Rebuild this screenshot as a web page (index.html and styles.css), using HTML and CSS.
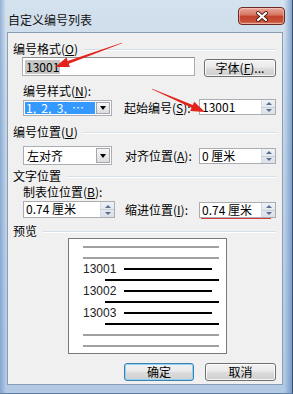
FILE: index.html
```html
<!DOCTYPE html>
<html lang="zh-CN">
<head>
<meta charset="utf-8"/>
<title>自定义编号列表</title>
<link rel="stylesheet" href="styles.css">
</head>
<body>
<div class="window">
  <div class="titlebar">
    <span class="title">自定义编号列表</span>
    <button class="close" aria-label="关闭">
      <svg width="14" height="11" viewBox="0 0 14 11">
        <path d="M3 2 L11 9 M11 2 L3 9" stroke="#4a1e16" stroke-width="4" stroke-linecap="round"/>
        <path d="M3 2 L11 9 M11 2 L3 9" stroke="#fff" stroke-width="2.2" stroke-linecap="round"/>
      </svg>
    </button>
  </div>

  <div class="client">
    <div class="sect">编号格式(<u>O</u>)</div>
    <div class="row row-format">
      <div class="field fmt"><span class="sel">13001</span></div>
      <button class="btn font-btn">字体(<u>F</u>)...</button>
    </div>

    <div class="sub">编号样式(<u>N</u>):</div>
    <div class="row row-style">
      <div class="combo combo-style"><span class="hl">1,  2,  3,  …</span><span class="drop"></span></div>
      <span class="lbl">起始编号(<u>S</u>):</span>
      <div class="spin"><span class="val">13001</span><span class="spin-btn"><i class="up"></i><i class="down"></i></span></div>
    </div>

    <div class="sect">编号位置(<u>U</u>)</div>
    <div class="row row-align">
      <div class="combo combo-align"><span class="txt">左对齐</span><span class="drop"></span></div>
      <span class="lbl">对齐位置(<u>A</u>):</span>
      <div class="spin"><span class="val">0 厘米</span><span class="spin-btn"><i class="up"></i><i class="down"></i></span></div>
    </div>

    <div class="sect sect-text">文字位置</div>
    <div class="sub sub-tab">制表位位置(<u>B</u>):</div>
    <div class="row row-indent">
      <div class="spin spin-tab"><span class="val">0.74 厘米</span><span class="spin-btn"><i class="up"></i><i class="down"></i></span></div>
      <span class="lbl">缩进位置(<u>I</u>):</span>
      <div class="spin spin-indent"><span class="val">0.74 厘米</span><span class="spin-btn"><i class="up"></i><i class="down"></i></span></div>
    </div>

    <div class="sect sect-preview">预览</div>
    <div class="preview">
      <svg width="157" height="114" viewBox="0 0 157 114">
        <g stroke="#a0a0a0" stroke-width="2">
          <line x1="14" y1="8" x2="150" y2="8"/>
          <line x1="14" y1="19" x2="150" y2="19"/>
          <line x1="14" y1="96" x2="150" y2="96"/>
          <line x1="14" y1="107" x2="150" y2="107"/>
        </g>
        <g stroke="#000" stroke-width="2">
          <line x1="55" y1="30" x2="143" y2="30"/>
          <line x1="36" y1="41" x2="150" y2="41"/>
          <line x1="55" y1="52" x2="143" y2="52"/>
          <line x1="36" y1="63" x2="150" y2="63"/>
          <line x1="55" y1="74" x2="143" y2="74"/>
          <line x1="36" y1="85" x2="150" y2="85"/>
        </g>
        <g class="pv-num">
          <text x="14" y="34">13001</text>
          <text x="14" y="56">13002</text>
          <text x="14" y="78">13003</text>
        </g>
      </svg>
    </div>

    <div class="actions">
      <button class="btn btn-default">确定</button>
      <button class="btn">取消</button>
    </div>
  </div>

  <!-- annotations drawn over the dialog -->
  <svg class="marks" width="293" height="394" viewBox="0 0 293 394">
    <polygon fill="#e3221c" points="122.1,43.3 68.7,63.7 69.9,67 55,67 66.5,57.6 67.7,60.9 121.9,42.7"/>
    <polygon fill="#e3221c" points="151.9,89.3 191.6,107.8 190.2,111 205,112 194.2,101.8 192.8,105 152.1,88.7"/>
    <line x1="201" y1="218.5" x2="271" y2="218.5" stroke="#d83a3a" stroke-width="1"/>
  </svg>
</div>
</body>
</html>
```

FILE: styles.css
```css
html, body {
  margin: 0;
  background: #fff;
}
body {
  font-family: "Noto Sans CJK SC", sans-serif;
  font-size: 12px;
  color: #000;
}
u {
  text-decoration: underline;
}

.window {
  position: relative;
  width: 293px;
  height: 394px;
  box-sizing: border-box;
  padding: 0 9px 8px 7px;
  display: flex;
  flex-direction: column;
  background:
    linear-gradient(90deg, rgba(70, 120, 185, .45) 0, rgba(70, 120, 185, 0) 6px, rgba(70, 120, 185, 0) 284px, rgba(70, 120, 185, .55) 292px),
    linear-gradient(#d4e1ee, #c2d4e8 40%, #b3cae4);
  border-right: 1px solid #3b4f66;
  border-bottom: 1px solid #5f7fa6;
}

.titlebar {
  height: 32px;
  display: flex;
  align-items: flex-start;
}
.title {
  margin: 12px 0 0 1px;
  line-height: 16px;
  font-size: 12px;
  color: #111;
}
.close {
  margin: 7px -2px 0 auto;
  width: 47px;
  height: 18px;
  padding: 0;
  border: 1px solid #6b2a22;
  border-radius: 4px;
  background: linear-gradient(#e9a99b 0, #d7735f 45%, #c2412b 50%, #c8523a 85%, #e08a6c 100%);
  box-shadow: inset 0 0 0 1px rgba(255, 220, 210, .5);
  display: flex;
  align-items: center;
  justify-content: center;
}

.client {
  flex: 1;
  background: #f0f0f0;
  border: 1px solid #8b9db3;
  padding: 0 6px 0 5px;
}

.sect {
  margin-top: 9px;
  height: 14px;
  line-height: 14px;
  display: flex;
  align-items: center;
  white-space: nowrap;
}
.sect::after {
  content: "";
  flex: 1;
  height: 1px;
  margin-left: 6px;
  background: #d5dfe5;
  box-shadow: 0 1px 0 #fff;
}
.sub {
  margin-top: 7px;
  padding-left: 10px;
  height: 14px;
  line-height: 14px;
}

.row {
  display: flex;
  align-items: flex-start;
}
.lbl {
  line-height: 16px;
  white-space: nowrap;
}

/* text input + font button */
.row-format {
  margin-top: 1px;
}
.field {
  box-sizing: border-box;
  background: #fff;
  border: 1px solid #abadb3;
  border-top-color: #8e8f8f;
  display: flex;
  align-items: center;
}
.fmt {
  margin-left: 9px;
  width: 173px;
  height: 19px;
  padding-left: 2px;
}
.sel {
  background: #c5c5c5;
  line-height: 14px;
  padding: 0 1px;
}
.font-btn {
  margin: 2px 0 0 auto;
  width: 72px;
  height: 18px;
}

/* combos */
.combo {
  box-sizing: border-box;
  background: #fff;
  border: 1px solid #abadb3;
  display: flex;
  align-items: stretch;
  padding: 1px;
  margin-left: 10px;
}
.combo-style {
  margin-top: 1px;
  width: 89px;
  height: 16px;
}
.combo-align {
  width: 89px;
  height: 19px;
}
.hl {
  flex: 1;
  background: #3399ff;
  color: #fff;
  line-height: 12px;
  padding-left: 1px;
  white-space: pre;
}
.combo .txt {
  flex: 1;
  line-height: 15px;
  padding-left: 2px;
}
.drop {
  width: 12px;
  margin-left: 1px;
  border: 1px solid #a4a7ad;
  background: linear-gradient(#f6f6f6, #dcdcdc);
  position: relative;
}
.drop::after {
  content: "";
  position: absolute;
  left: 50%;
  top: 50%;
  margin: -2px 0 0 -3px;
  border-left: 3px solid transparent;
  border-right: 3px solid transparent;
  border-top: 4px solid #000;
}

.row-style {
  margin-top: 1px;
}
.row-style .lbl {
  margin: 1px 0 0 12px;
}
.row-align {
  margin-top: 7px;
}
.row-align .lbl {
  margin: 2px 0 0 13px;
}
.row-align .spin {
  margin-top: 2px;
}

/* spinners */
.spin {
  box-sizing: border-box;
  width: 77px;
  height: 16px;
  margin-left: auto;
  background: #fff;
  border: 1px solid #abadb3;
  display: flex;
  align-items: stretch;
}
.spin .val {
  flex: 1;
  padding-left: 2px;
  line-height: 14px;
  white-space: nowrap;
}
.spin-btn {
  width: 13px;
  display: flex;
  flex-direction: column;
  border-left: 1px solid #d5d9e0;
  background: linear-gradient(#eef1f5, #dbe1ea);
}
.spin-btn i {
  flex: 1;
  position: relative;
}
.spin-btn i::after {
  content: "";
  position: absolute;
  left: 50%;
  top: 50%;
  margin-left: -3px;
  border-left: 3px solid transparent;
  border-right: 3px solid transparent;
}
.spin-btn .up::after {
  margin-top: -1px;
  border-bottom: 3px solid #5a6d8f;
}
.spin-btn .down {
  border-top: 1px solid #c9cfd9;
}
.spin-btn .down::after {
  margin-top: -2px;
  border-top: 3px solid #5a6d8f;
}

.sect-text {
  margin-top: 4px;
}
.sub-tab {
  margin-top: 2px;
}
.row-indent {
  margin-top: 2px;
}
.spin-tab {
  margin-left: 10px;
  width: 92px;
  height: 17px;
}
.row-indent .lbl {
  margin: 1px 0 0 10px;
}
.spin-indent {
  margin-top: 1px;
}

/* preview */
.sect-preview {
  margin-top: 6px;
}
.preview {
  margin-left: 55px;
  width: 159px;
  height: 116px;
  box-sizing: border-box;
  border: 1px solid #7a7a7a;
  background: #fff;
}
.preview svg {
  display: block;
}
.pv-num text {
  font-family: "Liberation Sans", sans-serif;
  font-size: 12px;
  fill: #222;
}

/* buttons */
.btn {
  box-sizing: border-box;
  padding: 0;
  font: inherit;
  font-size: 12px;
  line-height: 14px;
  color: #000;
  border: 1px solid #707070;
  border-radius: 3px;
  background: linear-gradient(#f2f2f2 0, #ebebeb 45%, #dddddd 50%, #cfcfcf 100%);
  box-shadow: inset 0 0 0 1px rgba(255, 255, 255, .8);
}
.actions {
  margin-top: 9px;
  display: flex;
  justify-content: flex-end;
  gap: 11px;
}
.actions .btn {
  width: 71px;
  height: 18px;
}
.actions .btn-default {
  width: 70px;
  border-color: #3c7fb1;
  box-shadow: inset 0 0 0 1px #8fd4f5;
}

.marks {
  position: absolute;
  left: 0;
  top: 0;
  pointer-events: none;
}
```
